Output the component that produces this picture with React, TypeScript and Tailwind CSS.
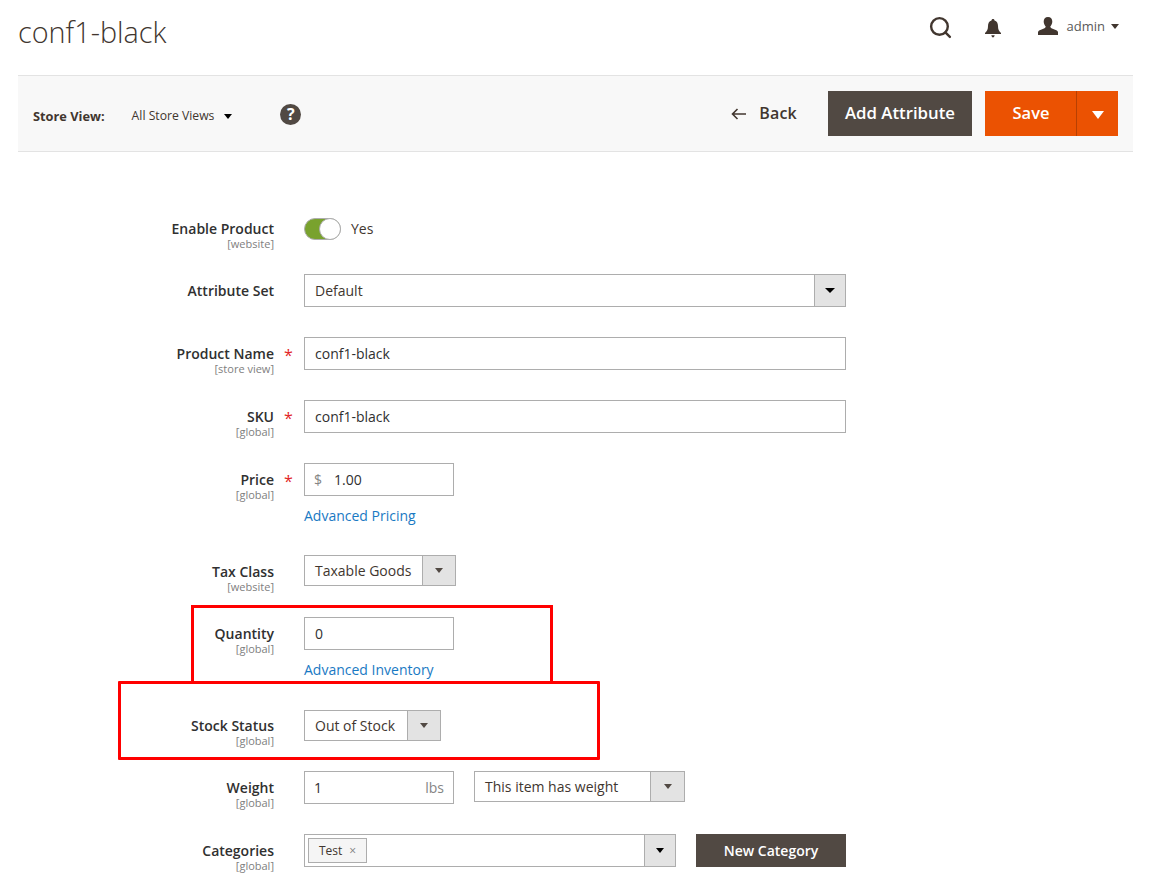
import { Search } from "lucide-react";
import type { ReactNode } from "react";

function Caret({ className }: { className: string }) {
  return <span className={`inline-block h-0 w-0 border-x-solid border-t-solid border-x-transparent ${className}`} />;
}

function SelectBox({ value, width, label, dark }: { value: string; width: string; label: string; dark?: boolean }) {
  return (
    <div className={`flex h-[33px] border border-[#adadad] bg-white ${width}`}>
      <div className="flex-1 truncate pl-[10px] leading-[31px] text-[#41362f]">{value}</div>
      <div className={`flex items-center justify-center border-l border-[#adadad] bg-[#e3e3e3] ${label}`}>
        <Caret className={dark ? "border-x-[5px] border-t-[5px] border-t-[#000]" : "border-x-[4.5px] border-t-[5px] border-t-[#514943]"} />
      </div>
    </div>
  );
}

function Field({
  label,
  scope,
  required,
  className,
  children,
}: {
  label: string;
  scope: string;
  required?: boolean;
  className: string;
  children: ReactNode;
}) {
  return (
    <div className={`flex items-start ${className}`}>
      <div className="w-[256px] shrink-0 pt-[7px] text-right">
        <div className="text-[14px] leading-[20px] font-semibold text-[#303030]">{label}</div>
        <div className="mt-[-2px] text-[11px] leading-[13px] text-[#808080]">{scope}</div>
      </div>
      <div className="w-[30px] shrink-0 pt-[8px] pl-[10px] text-[16px] leading-[20px] font-normal text-[#e22626]">
        {required ? "*" : ""}
      </div>
      {children}
    </div>
  );
}

const inputCls = "h-[33px] border border-[#adadad] bg-white pl-[10px] leading-[31px] text-[#303030]";

export default function App() {
  return (
    <div className="relative h-[873px] overflow-hidden bg-white pl-[18px] pr-[30px] text-[14px] text-[#41362f] [font-family:'Open_Sans',sans-serif]">
      {/* page title + account actions */}
      <header className="flex h-[75px] items-start justify-between">
        <h1 className="mt-[12px] text-[28.8px] leading-[40px] font-light text-[#41362f]">conf1-black</h1>
        <div className="mt-[14px] flex items-center pr-[14px]">
          <Search size={25} strokeWidth={2.3} className="translate-y-[1px] text-[#41362f]" />
          <svg width="16" height="19" viewBox="0 0 16 19" className="ml-[32px] mt-[4px]">
            <path
              fill="#41362f"
              d="M8 0c1 0 1.500.7 1.500 1.500C12 2.300 13 4.500 13 7c0 3.500.8 5 3 7v1H0v-1c2.200-2 3-3.500 3-7 0-2.500 1-4.700 3.500-5.500C6.500.7 7 0 8 0zM6.300 16.300h3.400C9.500 17.500 8.800 18.500 8 18.500s-1.500-1-1.700-2.200z"
            />
          </svg>
          <svg width="20" height="18" viewBox="0 0 20 18" className="ml-[37px] mb-[1px]">
            <path
              fill="#41362f"
              d="M10 0c2.800 0 4.300 2 4.300 4.600 0 2-.9 3.900-2 5 .1 1.200 1 1.800 3 2.500 2.500.9 4.200 1.700 4.700 3V18H0v-2.900c.5-1.300 2.200-2.100 4.700-3 2-.7 2.900-1.300 3-2.500-1.100-1.100-2-3-2-5C5.700 2 7.200 0 10 0z"
            />
          </svg>
          <span className="ml-[9px] mb-[2px] text-[13px] leading-[20px] text-[#5a5a5a]">admin</span>
          <Caret className="ml-[6px] mb-[1px] border-x-[4px] border-t-[5px] border-t-[#41362f]" />
        </div>
      </header>

      {/* toolbar */}
      <div className="flex h-[77px] items-center border-y border-[#e3e3e3] bg-[#f8f8f8] pl-[15px] pr-[15px]">
        <span className="mt-[5px] text-[12.8px] leading-[18px] font-bold text-[#41362f]">Store View:</span>
        <span className="ml-[27px] mt-[5px] text-[12.2px] leading-[18px] text-[#41362f]">All Store Views</span>
        <Caret className="ml-[10px] mt-[6px] border-x-[4.5px] border-t-[5px] border-t-[#000]" />
        <span className="ml-[48px] mb-[-1px] flex h-[21px] w-[21px] items-center justify-center rounded-full bg-[#514943] text-[16px] leading-none font-bold text-white">
          ?
        </span>
        <div className="ml-auto flex items-center">
          <svg width="16" height="12" viewBox="0 0 16 12" fill="none" stroke="#41362f" strokeWidth="1.6">
            <path d="M15 6H2M6.500 1 1.500 6l5 5" />
          </svg>
          <span className="ml-[12px] pb-[1px] text-[16px] leading-[20px] font-semibold text-[#41362f] tracking-[0.2px]">Back</span>
          <button className="ml-[31px] h-[45px] w-[144px] bg-[#514943] pb-[1px] text-[16.8px] font-semibold text-white">
            Add Attribute
          </button>
          <div className="ml-[13px] flex h-[45px] w-[133px] bg-[#eb5202] text-white">
            <div className="flex w-[92px] items-center justify-center border-r border-[#b84002] pb-[1px] pl-[1px] text-[16.5px] font-semibold">
              Save
            </div>
            <div className="flex flex-1 items-center justify-center pt-[3px]">
              <Caret className="border-x-[6px] border-t-[8px] border-t-white" />
            </div>
          </div>
        </div>
      </div>

      {/* product form */}
      <form className="pt-[60px]">
        <Field label="Enable Product" scope="[website]" className="mt-[0px] h-[62px]">
          <div className="mt-[6px] flex items-center">
            <div className="relative h-[22px] w-[37px] rounded-full border border-[#adadad] bg-[#79a22e]">
              <span className="absolute right-[-1px] top-[-1px] h-[22px] w-[22px] rounded-full border border-[#adadad] bg-white" />
            </div>
            <span className="ml-[10px] leading-[20px] text-[#41362f]">Yes</span>
          </div>
        </Field>
        <Field label="Attribute Set" scope="" className="h-[63px]">
          <SelectBox value="Default" width="w-[542px]" label="w-[31px]" dark />
        </Field>
        <Field label="Product Name" scope="[store view]" required className="h-[63px]">
          <div className={`${inputCls} w-[542px]`}>conf1-black</div>
        </Field>
        <Field label="SKU" scope="[global]" required className="h-[63px]">
          <div className={`${inputCls} w-[542px]`}>conf1-black</div>
        </Field>
        <Field label="Price" scope="[global]" required className="h-[92px]">
          <div>
            <div className={`${inputCls} flex w-[150px]`}>
              <span className="ml-[-1px] w-[20px] text-[#858585]">$</span>
              <span>1.00</span>
            </div>
            <a className="mt-[10px] block leading-[20px] text-[#1979c3]">Advanced Pricing</a>
          </div>
        </Field>
        <Field label="Tax Class" scope="[website]" className="h-[62px]">
          <SelectBox value="Taxable Goods" width="w-[152px] !h-[31px] [&>div:first-child]:leading-[29px]" label="w-[33px]" />
        </Field>
        <Field label="Quantity" scope="[global]" className="h-[93px]">
          <div>
            <div className={`${inputCls} w-[150px]`}>0</div>
            <a className="mt-[10px] block leading-[20px] text-[#1979c3]">Advanced Inventory</a>
          </div>
        </Field>
        <Field label="Stock Status" scope="[global]" className="h-[61px] [&>div:first-child]:pt-[6px]">
          <SelectBox value="Out of Stock" width="w-[137px] !h-[31px] [&>div:first-child]:leading-[29px]" label="w-[33px]" />
        </Field>
        <Field label="Weight" scope="[global]" className="h-[63px]">
          <div className={`${inputCls} flex w-[150px] justify-between pr-[9px]`}>
            <span className="ml-[-1px]">1</span>
            <span className="text-[#858585]">lbs</span>
          </div>
          <div className="ml-[20px]">
            <SelectBox value="This item has weight" width="w-[211px] !h-[31px] [&>div:first-child]:leading-[29px]" label="w-[34px]" />
          </div>
        </Field>
        <Field label="Categories" scope="[global]" className="h-[40px]">
          <div className="flex h-[33px] w-[372px] border border-[#adadad] bg-white">
            <div className="flex flex-1 items-center pl-[3px]">
              <span className="flex h-[25px] w-[59px] items-center border border-[#adadad] bg-[#f5f5f5] pl-[10px] text-[12px] text-[#41362f]">
                Test<span className="ml-[7px] text-[12px] leading-none text-[#808080]">×</span>
              </span>
            </div>
            <div className="flex w-[31px] items-center justify-center border-l border-[#adadad] bg-[#e3e3e3]">
              <Caret className="border-x-[4.5px] border-t-[5px] border-t-[#000]" />
            </div>
          </div>
          <button type="button" className="ml-[20px] h-[33px] w-[150px] bg-[#514943] text-[14px] font-semibold text-white">
            New Category
          </button>
        </Field>
      </form>

      {/* red annotation boxes drawn over the screenshot */}
      <div className="absolute left-[191px] top-[605px] h-[79px] w-[362px] border-[3px] border-[#f00]" />
      <div className="absolute left-[118px] top-[681px] h-[79px] w-[482px] rounded-[1px] border-[3px] border-[#f00]" />
    </div>
  );
}
